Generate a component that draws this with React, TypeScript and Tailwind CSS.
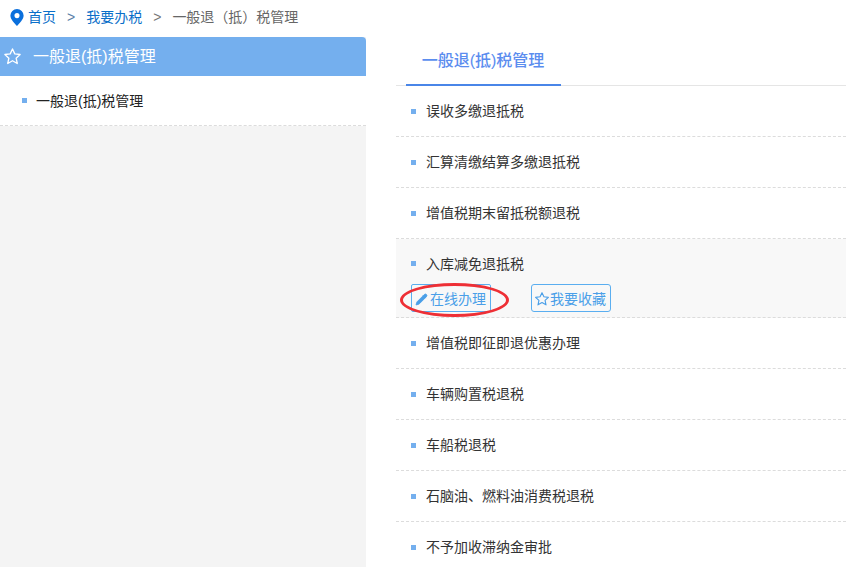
import { Pencil } from "lucide-react";

const font = "font-['Liberation_Sans','Noto_Sans_CJK_SC',sans-serif]";

function Star({ className }: { className: string }) {
    return (
        <svg viewBox="0 0 24 24" fill="none" stroke="currentColor" strokeWidth="1.7" strokeLinejoin="round" className={className}>
            <path d="M12 2.500l2.900 6.200 6.700.8-5 4.600 1.400 6.700-6-3.400-6 3.400 1.400-6.700-5-4.600 6.700-.8z" />
        </svg>
    );
}

function Row({ label }: { label: string }) {
    return (
        <div className="flex h-[51px] shrink-0 items-center border-b border-dashed border-[#dcdcdc] pl-[15px]">
            <span className="h-[5px] w-[5px] bg-[#74afee]" />
            <span className="ml-[10px] text-sm text-[#333]">{label}</span>
        </div>
    );
}

export default function App() {
    return (
        <div className={`${font} h-[567px] w-[846px] overflow-hidden bg-white`}>
            <div className="flex h-[34px] items-center pl-[10px] text-sm">
                <svg viewBox="0 0 14 18" className="h-[17px] w-[14px] text-[#0a6fdc]">
                    <path fill="currentColor" fillRule="evenodd" d="M7 0a7 7 0 0 1 7 7c0 4-4.500 8.500-7 11C4.500 15.500 0 11 0 7a7 7 0 0 1 7-7zm0 4.300a2.700 2.700 0 1 0 0 5.400 2.700 2.700 0 0 0 0-5.400z" />
                </svg>
                <span className="ml-[4px] text-[#0a6fc9]">首页</span>
                <span className="ml-[11px] text-[#5a7fa8]">&gt;</span>
                <span className="ml-[11px] text-[#0a6fc9]">我要办税</span>
                <span className="ml-[11px] text-[#777]">&gt;</span>
                <span className="ml-[11px] text-[#666]">一般退（抵）税管理</span>
            </div>

            <div className="relative mt-[3px] flex h-[530px]">
                <div className="w-[366px] shrink-0 bg-[#f4f4f4]">
                    <div className="flex h-[39px] items-center rounded-tr-[4px] bg-[#74afee] pl-[3px] text-base text-white">
                        <Star className="h-[19px] w-[19px]" />
                        <span className="ml-[11px]">一般退(抵)税管理</span>
                    </div>
                    <div className="flex h-[50px] items-center border-b border-dashed border-[#dcdcdc] bg-white pl-[22px]">
                        <span className="h-[5px] w-[5px] bg-[#74afee]" />
                        <span className="ml-[9px] text-sm text-[#222]">一般退(抵)税管理</span>
                    </div>
                </div>

                <div className="ml-[30px] flex min-w-0 flex-1 flex-col">
                    <div className="h-[49px] shrink-0 border-b border-[#e5e5e5]">
                        <div className="ml-[10px] flex h-[49px] w-[155px] items-center justify-center border-b-2 border-[#4a86e8] pr-[1px] text-base font-medium text-[#5b8def]">
                            一般退(抵)税管理
                        </div>
                    </div>
                    <Row label="误收多缴退抵税" />
                    <Row label="汇算清缴结算多缴退抵税" />
                    <Row label="增值税期末留抵税额退税" />

                    <div className="h-[79px] shrink-0 border-b border-dashed border-[#dcdcdc] bg-[#f8f8f8] pl-[15px]">
                        <div className="flex h-[45px] items-center pt-[4px]">
                            <span className="h-[5px] w-[5px] bg-[#74afee]" />
                            <span className="ml-[10px] text-sm text-[#333]">入库减免退抵税</span>
                        </div>
                        <div className="flex">
                            <button className="flex h-[28px] w-[80px] items-center rounded-[2px] border border-[#5aaef0] pl-[3px] pt-[2px] text-sm text-[#4a9fe8]">
                                <Pencil size={13} fill="currentColor" strokeWidth={1.5} />
                                <span className="ml-[2px]">在线办理</span>
                            </button>
                            <button className="ml-[40px] flex h-[28px] w-[80px] items-center rounded-[3px] border border-[#5aaef0] pl-[2px] pt-[2px] text-sm text-[#4a9fe8]">
                                <Star className="h-[16px] w-[16px]" />
                                <span>我要收藏</span>
                            </button>
                        </div>
                    </div>

                    <Row label="增值税即征即退优惠办理" />
                    <Row label="车辆购置税退税" />
                    <Row label="车船税退税" />
                    <Row label="石脑油、燃料油消费税退税" />
                    <Row label="不予加收滞纳金审批" />
                </div>

                {/* red marker drawn over the button */}
                <div className="pointer-events-none absolute left-[400px] top-[246px] h-[34px] w-[109px] rounded-[50%] border-[3px] border-[#ee2f35]" />
            </div>
        </div>
    );
}
